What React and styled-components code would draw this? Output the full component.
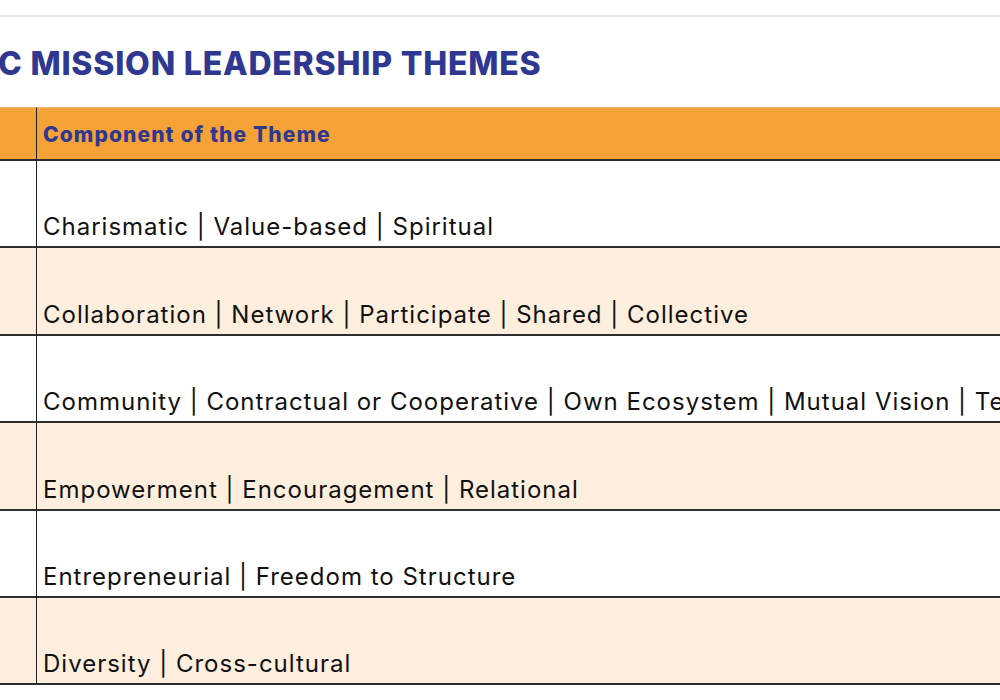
import React from "react";
import styled, { createGlobalStyle } from "styled-components";

const Global = createGlobalStyle`
  html, body { margin: 0; padding: 0; background: #ffffff; overflow: hidden; }
  body { font-family: "Inter", "Noto Sans", sans-serif; }
`;

const Page = styled.div`
  width: 1000px;
  height: 700px;
  overflow: hidden;
  padding-top: 15px;
  box-sizing: border-box;
`;

const TopRule = styled.div`
  height: 2px;
  background: #e6e6e6;
  width: 100%;
`;

const Title = styled.h1`
  margin: 0;
  padding: 27px 0 0 0;
  height: 90px;
  box-sizing: border-box;
  font-family: "Inter", sans-serif;
  font-weight: 800;
  font-size: 32px;
  letter-spacing: 0.8px;
  text-indent: -2px;
  color: #2f3891;
  white-space: nowrap;
  line-height: 40px;
`;

const Table = styled.div`
  width: 1240px;
  display: grid;
  grid-template-columns: 36px 1fr;
`;

const HeadCell = styled.div`
  height: 54px;
  box-sizing: border-box;
  background: #f5a236;
  border-top: 1px solid #e9b57a;
  border-bottom: 2px solid #2b2b2b;
  border-left: ${(p) => (p.$divider ? "1.5px solid #1f1f1f" : "none")};
  display: flex;
  align-items: center;
  padding: 2px 0 0 6px;
  font-family: "Inter", sans-serif;
  font-weight: 800;
  font-size: 21px;
  letter-spacing: 1.1px;
  color: #2f3891;
  white-space: nowrap;
`;

const Cell = styled.div`
  height: 87.4px;
  box-sizing: border-box;
  background: ${(p) => (p.$shaded ? "#fdeedd" : "#ffffff")};
  border-bottom: 2px solid #2e2e2e;
  border-left: ${(p) => (p.$divider ? "1.5px solid #1f1f1f" : "none")};
  display: flex;
  align-items: flex-end;
  padding: 0 0 5px 6px;
  font-family: "Inter", sans-serif;
  font-weight: 400;
  font-size: 24px;
  letter-spacing: 1px;
  color: #111111;
  white-space: nowrap;
`;

const rows = [
  "Charismatic | Value-based | Spiritual",
  "Collaboration | Network | Participate | Shared | Collective",
  "Community | Contractual or Cooperative | Own Ecosystem | Mutual Vision | Technology",
  "Empowerment | Encouragement | Relational",
  "Entrepreneurial | Freedom to Structure",
  "Diversity | Cross-cultural",
];

export default function App() {
  return (
    <Page>
      <Global />
      <TopRule />
      <Title>C MISSION LEADERSHIP THEMES</Title>
      <Table>
        <HeadCell />
        <HeadCell $divider>Component of the Theme</HeadCell>
        {rows.map((r, i) => (
          <React.Fragment key={r}>
            <Cell $shaded={i % 2 === 1} />
            <Cell $shaded={i % 2 === 1} $divider>
              {r}
            </Cell>
          </React.Fragment>
        ))}
      </Table>
    </Page>
  );
}
